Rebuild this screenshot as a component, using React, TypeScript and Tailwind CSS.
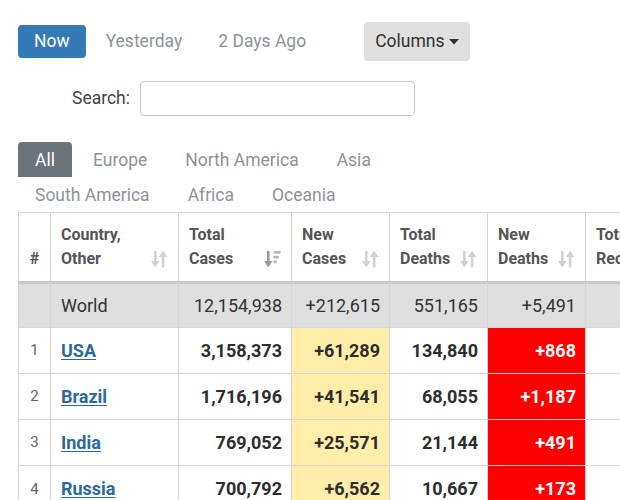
import React from 'react';

type Row = {
  rank?: number;
  country: string;
  totalCases: string;
  newCases: string;
  totalDeaths: string;
  newDeaths: string;
  totalRecovered: string;
};

const world: Row = {
  country: 'World',
  totalCases: '12,154,938',
  newCases: '+212,615',
  totalDeaths: '551,165',
  newDeaths: '+5,491',
  totalRecovered: '7,060,548',
};

const rows: Row[] = [
  { rank: 1, country: 'USA', totalCases: '3,158,373', newCases: '+61,289', totalDeaths: '134,840', newDeaths: '+868', totalRecovered: '1,373,948' },
  { rank: 2, country: 'Brazil', totalCases: '1,716,196', newCases: '+41,541', totalDeaths: '68,055', newDeaths: '+1,187', totalRecovered: '1,117,922' },
  { rank: 3, country: 'India', totalCases: '769,052', newCases: '+25,571', totalDeaths: '21,144', newDeaths: '+491', totalRecovered: '476,565' },
  { rank: 4, country: 'Russia', totalCases: '700,792', newCases: '+6,562', totalDeaths: '10,667', newDeaths: '+173', totalRecovered: '472,511' },
];

function SortIcon() {
  return (
    <svg width="17" height="18" viewBox="0 0 17 18" className="shrink-0 mb-[3px]">
      <rect x="3" y="1" width="2.6" height="11" fill="#d2d2d2" />
      <polygon points="0,11 8.6,11 4.3,17.5" fill="#d2d2d2" />
      <polygon points="7.8,7 16.4,7 12.1,0.5" fill="#d2d2d2" />
      <rect x="10.8" y="6" width="2.6" height="11.5" fill="#d2d2d2" />
    </svg>
  );
}

function SortDescIcon() {
  return (
    <svg width="17" height="18" viewBox="0 0 17 18" className="shrink-0 mb-[3px]">
      <rect x="3" y="1" width="2.6" height="11" fill="#9a9a9a" />
      <polygon points="0,11 8.6,11 4.3,17.5" fill="#9a9a9a" />
      <rect x="9.5" y="1" width="7" height="2.6" fill="#b5b5b5" />
      <rect x="9.5" y="5.8" width="5.2" height="2.6" fill="#b5b5b5" />
      <rect x="9.5" y="10.6" width="3.4" height="2.6" fill="#b5b5b5" />
    </svg>
  );
}

function HeadCell({ lines, sorted, last }: { lines: string[]; sorted?: boolean; last?: boolean }) {
  return (
    <th className={`border-r border-[#d6d6d6] px-[10px] pt-[10px] pb-[10px] align-bottom text-left font-bold text-[16px] leading-6 text-[#555] ${last ? 'border-r-0' : ''}`}>
      <div className="flex items-end justify-between">
        <div className="whitespace-nowrap">
          {lines.map((l) => (
            <div key={l}>{l}</div>
          ))}
        </div>
        {!last && (sorted ? <SortDescIcon /> : <SortIcon />)}
      </div>
    </th>
  );
}

export default function App() {
  const tabs1 = ['Europe', 'North America', 'Asia'];
  const tabs2 = ['South America', 'Africa', 'Oceania'];

  return (
    <div className="h-[500px] w-[620px] overflow-hidden bg-white font-['Roboto','Liberation_Sans',sans-serif] text-[#333]">
      <div className="pt-[22px] pl-[18px] flex items-center h-[61px]">
        <button className="h-[33px] px-[16px] rounded-[4px] bg-[#337ab7] text-white text-[17.5px] leading-none">
          Now
        </button>
        <button className="px-[18px] ml-[2px] text-[17.5px] text-[#8d939a]">Yesterday</button>
        <button className="px-[18px] text-[17.5px] text-[#8d939a]">2 Days Ago</button>
        <button className="ml-[40px] h-[39px] px-[11px] rounded-[4px] bg-[#e0e0e0] text-[17.5px] text-[#333] flex items-center gap-[5px]">
          Columns
          <svg width="10" height="6" viewBox="0 0 10 6">
            <polygon points="0,0 10,0 5,5.5" fill="#333" />
          </svg>
        </button>
      </div>

      <div className="mt-[20px] flex items-center">
        <label className="ml-[72px] text-[17.5px] text-[#444]">Search:</label>
        <input className="ml-[10px] h-[35px] w-[275px] rounded-[4px] border border-[#c8c8c8] outline-none" />
      </div>

      <div className="mt-[26px] pl-[18px]">
        <div className="flex gap-[4px] h-[35px] items-stretch">
          <div className="px-[17px] pt-[1px] flex items-center rounded-t-[4px] bg-[#6b737b] text-white text-[17.5px]">All</div>
          {tabs1.map((t) => (
            <div key={t} className="px-[17px] pt-[1px] flex items-center text-[17.5px] text-[#8d939a]">{t}</div>
          ))}
        </div>
        <div className="flex gap-[4px] h-[35px] items-stretch">
          {tabs2.map((t) => (
            <div key={t} className="px-[17px] pt-[1px] flex items-center text-[17.5px] text-[#8d939a]">{t}</div>
          ))}
        </div>
      </div>

      <div className="ml-[18px] w-[640px]">
        <table className="table-fixed border-collapse w-[697px] border-l border-t border-[#d6d6d6]">
          <colgroup>
            <col className="w-[32px]" />
            <col className="w-[128px]" />
            <col className="w-[113px]" />
            <col className="w-[98px]" />
            <col className="w-[98px]" />
            <col className="w-[98px]" />
            <col className="w-[130px]" />
          </colgroup>
          <thead>
            <tr className="h-[68px]">
              <th className="border-r border-[#d6d6d6] pb-[10px] align-bottom text-center font-bold text-[16px] leading-6 text-[#555]">#</th>
              <HeadCell lines={['Country,', 'Other']} />
              <HeadCell lines={['Total', 'Cases']} sorted />
              <HeadCell lines={['New', 'Cases']} />
              <HeadCell lines={['Total', 'Deaths']} />
              <HeadCell lines={['New', 'Deaths']} />
              <HeadCell lines={['Total', 'Recovered']} last />
            </tr>
          </thead>
          <tbody className="text-[18px]">
            <tr className="h-[45px] bg-[#dfdfdf] border-t-[3px] border-[#c9c9c9] shadow-[inset_0_1px_1px_rgba(0,0,0,0.08)]">
              <td className="border-r border-[#d6d6d6]"></td>
              <td className="border-r border-[#d6d6d6] px-[10px] text-left">{world.country}</td>
              <td className="border-r border-[#d6d6d6] px-[9px] text-right">{world.totalCases}</td>
              <td className="border-r border-[#d6d6d6] px-[9px] text-right">{world.newCases}</td>
              <td className="border-r border-[#d6d6d6] px-[9px] text-right">{world.totalDeaths}</td>
              <td className="border-r border-[#d6d6d6] px-[9px] text-right">{world.newDeaths}</td>
              <td className="px-[9px] text-right text-[#555]">{world.totalRecovered}</td>
            </tr>
            {rows.map((r) => (
              <tr key={r.country} className="h-[46px] border-t border-[#d6d6d6] font-bold text-[#2d2d2d]">
                <td className="border-r border-[#d6d6d6] text-center text-[15px] font-normal text-[#666]">{r.rank}</td>
                <td className="border-r border-[#d6d6d6] px-[10px] text-left">
                  <a href="#" className="text-[#2d6a9a] underline underline-offset-2">{r.country}</a>
                </td>
                <td className="border-r border-[#d6d6d6] px-[9px] text-right">{r.totalCases}</td>
                <td className="border-r border-[#d6d6d6] px-[9px] text-right bg-[#ffeeaa]">{r.newCases}</td>
                <td className="border-r border-[#d6d6d6] px-[9px] text-right">{r.totalDeaths}</td>
                <td className="border-r border-[#d6d6d6] px-[9px] text-right bg-[#ff0000] text-white">{r.newDeaths}</td>
                <td className="px-[9px] text-right">{r.totalRecovered}</td>
              </tr>
            ))}
          </tbody>
        </table>
      </div>
    </div>
  );
}
